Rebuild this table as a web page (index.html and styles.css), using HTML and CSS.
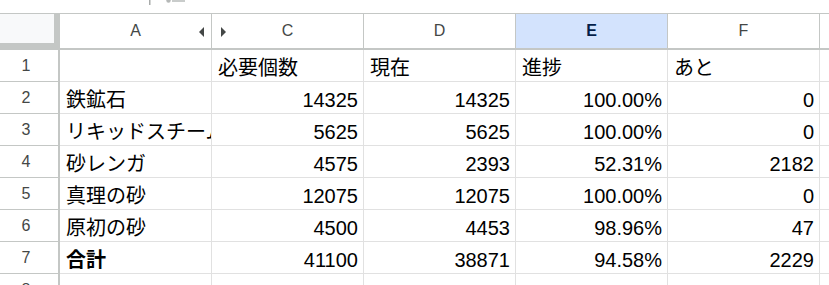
FILE: index.html
```html
<!DOCTYPE html>
<html lang="ja">
<head>
<meta charset="utf-8">
<link rel="stylesheet" href="styles.css">
</head>
<body>
<div class="topstrip">
  <svg class="remnant" width="40" height="13" viewBox="0 0 40 13">
    <rect x="0" y="0" width="1.5" height="5" fill="#a8abaa"/>
    <circle cx="19.5" cy="0.5" r="2.2" fill="#b5b8b7"/>
    <rect x="23" y="0" width="13" height="2" fill="#c9cccb"/>
  </svg>
</div>
<div class="sheet">
  <div class="cell corner"><div class="corner-fill"></div></div>
  <div class="cell colhead colhead-a">A<span class="tri tri-left"></span></div>
  <div class="cell colhead colhead-c">C<span class="tri tri-right"></span></div>
  <div class="cell colhead">D</div>
  <div class="cell colhead selected">E</div>
  <div class="cell colhead">F</div>
  <div class="cell colhead last"></div>

  <div class="cell rowhead">1</div>
  <div class="cell"></div>
  <div class="cell">必要個数</div>
  <div class="cell">現在</div>
  <div class="cell">進捗</div>
  <div class="cell">あと</div>
  <div class="cell last"></div>

  <div class="cell rowhead">2</div>
  <div class="cell">鉄鉱石</div>
  <div class="cell num">14325</div>
  <div class="cell num">14325</div>
  <div class="cell num">100.00%</div>
  <div class="cell num">0</div>
  <div class="cell last"></div>

  <div class="cell rowhead">3</div>
  <div class="cell">リキッドスチーム</div>
  <div class="cell num">5625</div>
  <div class="cell num">5625</div>
  <div class="cell num">100.00%</div>
  <div class="cell num">0</div>
  <div class="cell last"></div>

  <div class="cell rowhead">4</div>
  <div class="cell">砂レンガ</div>
  <div class="cell num">4575</div>
  <div class="cell num">2393</div>
  <div class="cell num">52.31%</div>
  <div class="cell num">2182</div>
  <div class="cell last"></div>

  <div class="cell rowhead">5</div>
  <div class="cell">真理の砂</div>
  <div class="cell num">12075</div>
  <div class="cell num">12075</div>
  <div class="cell num">100.00%</div>
  <div class="cell num">0</div>
  <div class="cell last"></div>

  <div class="cell rowhead">6</div>
  <div class="cell">原初の砂</div>
  <div class="cell num">4500</div>
  <div class="cell num">4453</div>
  <div class="cell num">98.96%</div>
  <div class="cell num">47</div>
  <div class="cell last"></div>

  <div class="cell rowhead">7</div>
  <div class="cell bold">合計</div>
  <div class="cell num">41100</div>
  <div class="cell num">38871</div>
  <div class="cell num">94.58%</div>
  <div class="cell num">2229</div>
  <div class="cell last"></div>

  <div class="cell rowhead">8</div>
  <div class="cell"></div>
  <div class="cell"></div>
  <div class="cell"></div>
  <div class="cell"></div>
  <div class="cell"></div>
  <div class="cell last"></div>
</div>
</body>
</html>
```
FILE: styles.css
```css
html, body {
  margin: 0;
  padding: 0;
  background: #ffffff;
  overflow: hidden;
}

body {
  font-family: "Liberation Sans", Arial, "Noto Sans CJK JP", sans-serif;
  color: #000000;
}

.topstrip {
  height: 13px;
  padding-left: 149px;
  box-sizing: border-box;
}

.remnant {
  display: block;
}

.sheet {
  display: grid;
  grid-template-columns: 60px repeat(5, 152px) 1fr;
  grid-template-rows: 36px repeat(8, 32px);
  border-top: 1px solid #c4c7c5;
}

.cell {
  box-sizing: border-box;
  border-right: 1px solid #e1e1e1;
  border-bottom: 1px solid #e1e1e1;
  font-size: 20px;
  line-height: 20px;
  padding: 0 5px 3px 6px;
  display: flex;
  align-items: flex-end;
  white-space: nowrap;
  overflow: hidden;
}

.cell.last {
  border-right: none;
}

.num {
  justify-content: flex-end;
}

.bold {
  font-weight: bold;
}

.rowhead {
  border-right: 2px solid #c4c7c5;
  border-bottom: 1px solid #c4c7c5;
  justify-content: center;
  align-items: center;
  padding: 0 6px 0 0;
  font-size: 16px;
  color: #444746;
}

.corner {
  border-right: 2px solid #c4c7c5;
  border-bottom: 2px solid #c4c7c5;
  background: #c4c7c5;
  padding: 0;
  align-items: flex-start;
}

.corner-fill {
  width: 54px;
  height: 29px;
  background: #f8f9fa;
}

.colhead {
  position: relative;
  border-right: 1px solid #c4c7c5;
  border-bottom: 2px solid #c4c7c5;
  justify-content: center;
  align-items: center;
  padding: 0;
  font-size: 16px;
  color: #444746;
}

.colhead.selected {
  background: #d3e3fd;
  color: #041e49;
  font-weight: bold;
}

.tri {
  position: absolute;
  top: 13px;
  width: 0;
  height: 0;
  border-top: 5px solid transparent;
  border-bottom: 5px solid transparent;
}

.tri-left {
  right: 7px;
  border-right: 5px solid #444746;
}

.tri-right {
  left: 9px;
  border-left: 5px solid #444746;
}
```
